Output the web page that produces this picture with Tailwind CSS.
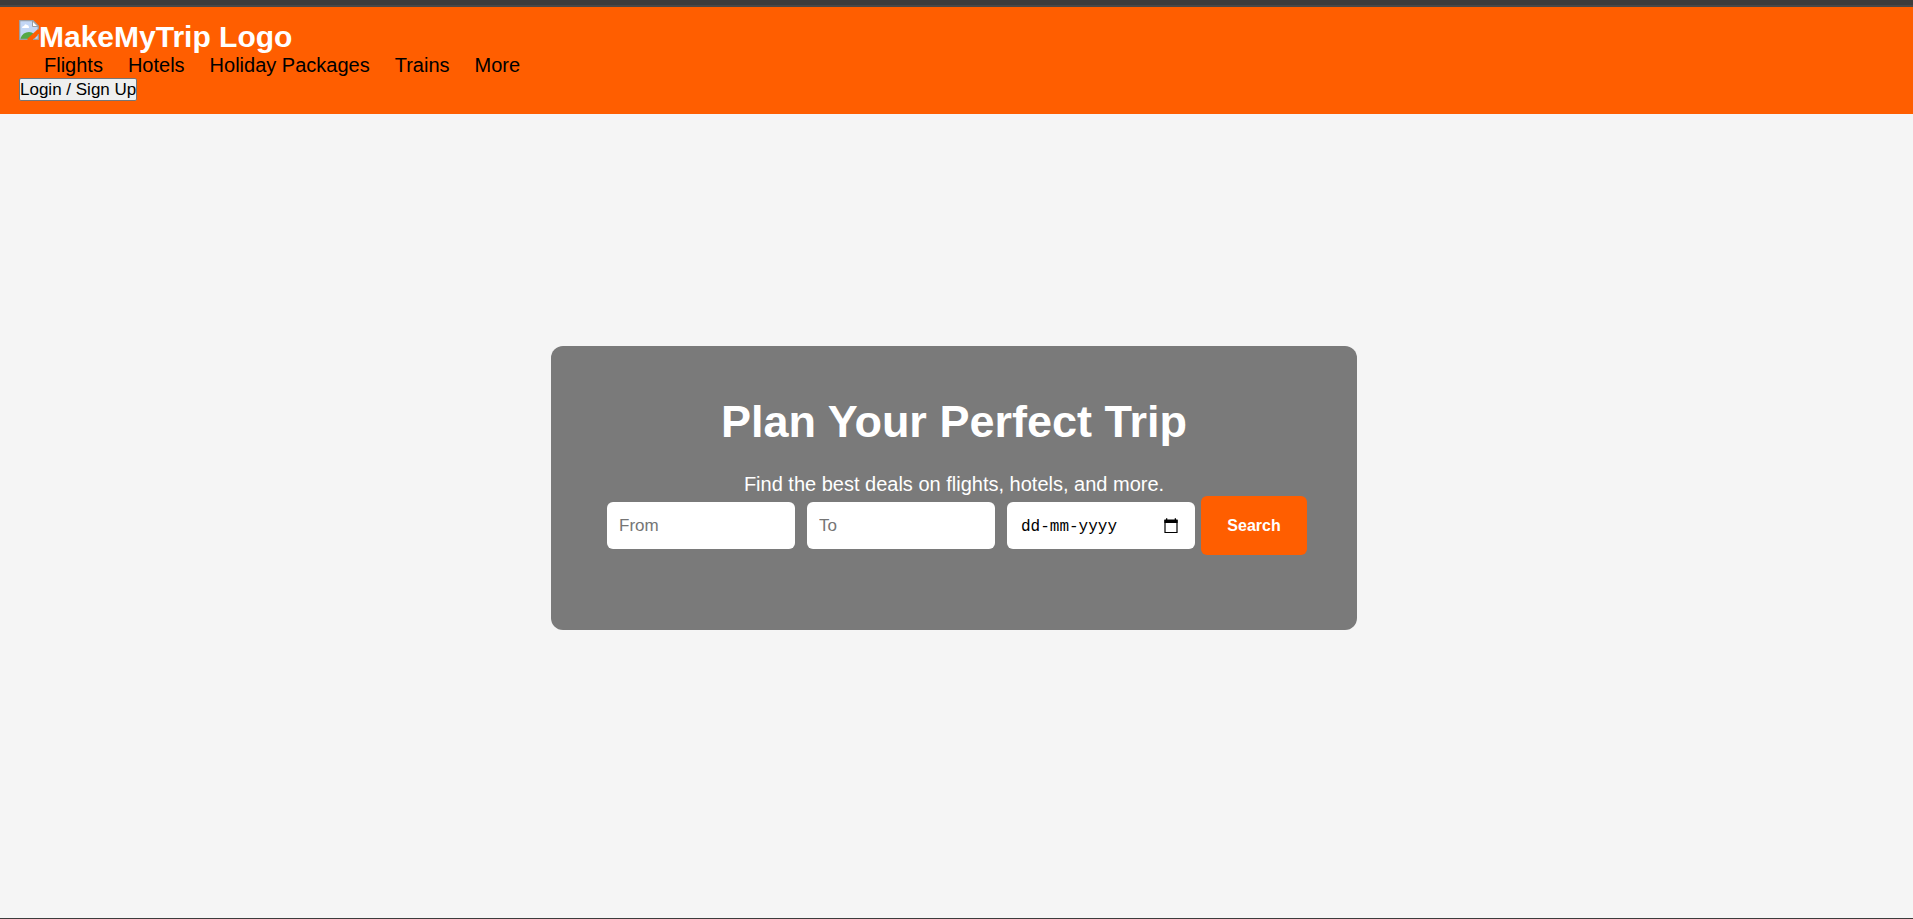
<!DOCTYPE html>
<html lang="en">
<head>
<meta charset="utf-8">
<meta name="viewport" content="width=device-width, initial-scale=1">
<title>MakeMyTrip</title>
<script src="https://cdn.jsdelivr.net/npm/@tailwindcss/browser@4"></script>
</head>
<body class="flex min-h-screen flex-col border-b border-[#3c3c3c] bg-[#f5f5f5] font-['Liberation_Sans',Arial,sans-serif]">
  <div class="h-[7px] border-b-2 border-[#484848] bg-[#3c3c3c]"></div>
  <header class="bg-[#ff5e00] px-[19px] py-[13px]">
    <a href="#" class="flex items-start text-[30px] leading-[34px] font-bold text-white">
      <svg class="size-5 shrink-0" viewBox="0 0 20 20" aria-hidden="true">
        <path d="M1 1H14L19 6V11L10 19H1Z" fill="#c3d7f5"/>
        <path d="M3 8Q3 6 5 6Q6 3 8 5Q10 5 10 8Z" fill="#fff"/>
        <path d="M1.500 18Q4 12 10 12Q13 12 15 14L10 19H1.500Z" fill="#55a844"/>
        <path d="M10.500 19H8L19 9V12Z" fill="#ff5e00"/>
        <path d="M15 19L19 15V19Z" fill="#c3d7f5"/>
        <path d="M8.500 19.300H.7V.7H14L19.300 6V9.500M19.300 14V19.300H14" fill="none" stroke="#9a9fa5" stroke-width="1.300"/>
        <path d="M13.500 1V6.500H19Z" fill="#fff" stroke="#9a9fa5"/>
      </svg>
      <span>MakeMyTrip Logo</span>
    </a>
    <nav class="mb-px flex gap-[25px] pl-[25px] text-[20px] leading-[23px] text-black">
      <a href="#">Flights</a>
      <a href="#">Hotels</a>
      <a href="#">Holiday Packages</a>
      <a href="#">Trains</a>
      <a href="#">More</a>
    </nav>
    <button type="button" class="block rounded-[2px] border border-[#767676] bg-[#efefef] text-[17px] leading-[21px] text-black">Login / Sign Up</button>
  </header>
  <main class="flex flex-1 items-center justify-center pr-[5px] pb-14">
    <section class="rounded-xl bg-[#7a7a7a] px-[50px] pt-[50px] pb-[75px] text-center text-white">
      <h1 class="mb-[25px] text-[45px] leading-[52px] font-bold">Plan Your Perfect Trip</h1>
      <p class="text-[20px] leading-[23px]">Find the best deals on flights, hotels, and more.</p>
      <form class="flex items-center text-[16px]">
        <input type="text" aria-label="From" placeholder="From" class="mx-1.5 h-[47px] w-[188px] rounded-md bg-white px-3 text-[17px] text-black placeholder:text-[#757575]">
        <input type="text" aria-label="To" placeholder="To" class="mx-1.5 h-[47px] w-[188px] rounded-md bg-white px-3 text-[17px] text-black placeholder:text-[#757575]">
        <div class="mx-1.5 flex h-[47px] w-[188px] items-center rounded-md bg-white pr-4 pl-[14px]">
          <input type="text" aria-label="Travel date" placeholder="dd-mm-yyyy" class="min-w-0 flex-1 pt-0.5 font-['Liberation_Mono',monospace] text-black placeholder:text-black">
          <button type="button" aria-label="Choose date">
            <svg class="size-4" viewBox="0 0 16 16" aria-hidden="true">
              <path d="M2 2.500H14V14.500H2Z" fill="none" stroke="#000" stroke-width="1.200"/>
              <path d="M1.400 1.500H14.600V5H1.400ZM3 .2H4.300V2H3ZM11.700 .2H13V2H11.700Z"/>
            </svg>
          </button>
        </div>
        <button type="submit" class="h-[59px] w-[106px] rounded-md bg-[#ff5e00] font-bold text-white">Search</button>
      </form>
    </section>
  </main>
</body>
</html>
